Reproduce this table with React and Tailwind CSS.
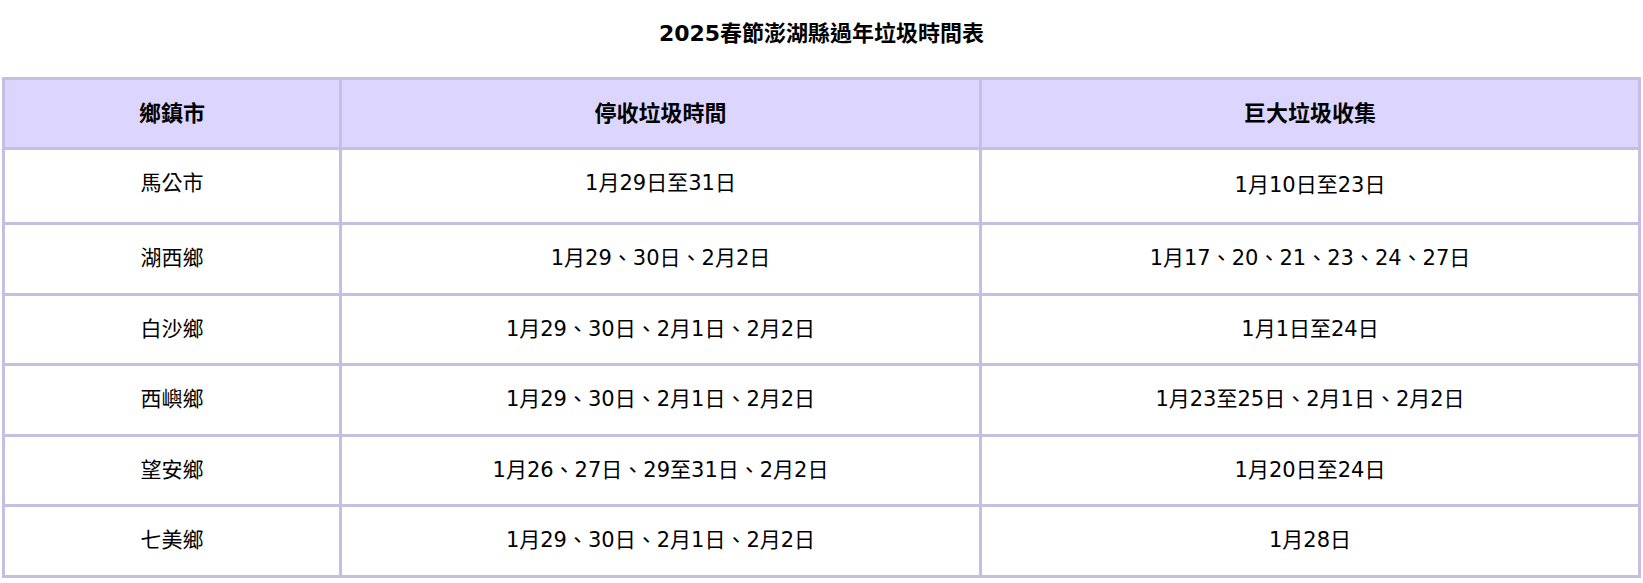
import React from 'react';

const rows = [
  ['馬公市', '1月29日至31日', '1月10日至23日'],
  ['湖西鄉', '1月29、30日、2月2日', '1月17、20、21、23、24、27日'],
  ['白沙鄉', '1月29、30日、2月1日、2月2日', '1月1日至24日'],
  ['西嶼鄉', '1月29、30日、2月1日、2月2日', '1月23至25日、2月1日、2月2日'],
  ['望安鄉', '1月26、27日、29至31日、2月2日', '1月20日至24日'],
  ['七美鄉', '1月29、30日、2月1日、2月2日', '1月28日'],
];

const font = { fontFamily: '"DejaVu Sans", "Noto Sans CJK TC", sans-serif' };

export default function App() {
  return (
    <div className="w-[1643px] h-[583px] bg-white text-black" style={font}>
      {/* Title */}
      <div className="h-[77px] flex items-center justify-center pb-[10px]">
        <h1 className="text-[22px] font-bold">2025春節澎湖縣過年垃圾時間表</h1>
      </div>

      {/* Table */}
      <div className="mx-[2px]">
        <table className="w-full table-fixed border-separate border-spacing-0">
          <colgroup>
            <col className="w-[340px]" />
            <col className="w-[640px]" />
            <col />
          </colgroup>
          <thead>
            <tr className="bg-[#dcd6fe]">
              <th className="h-[73px] border-[3px] border-[#c4bee2] text-[22px] font-bold">鄉鎮市</th>
              <th className="h-[73px] border-y-[3px] border-r-[3px] border-[#c4bee2] text-[22px] font-bold">停收垃圾時間</th>
              <th className="h-[73px] border-y-[3px] border-r-[3px] border-[#c4bee2] text-[22px] font-bold">巨大垃圾收集</th>
            </tr>
          </thead>
          <tbody>
            {rows.map((r, i) => (
              <tr key={r[0]}>
                <td className={`${i === 0 ? 'h-[75px] pb-[5px]' : 'h-[70.5px]'} border-x-[3px] border-b-[3px] border-[#c4bee2] text-center text-[21px]`}>{r[0]}</td>
                <td className={`${i === 0 ? 'h-[75px] pb-[5px]' : 'h-[70.5px]'} border-r-[3px] border-b-[3px] border-[#c4bee2] text-center text-[21px]`}>{r[1]}</td>
                <td className={`${i === 0 ? 'h-[75px]' : 'h-[70.5px]'} border-r-[3px] border-b-[3px] border-[#c4bee2] text-center text-[21px]`}>{r[2]}</td>
              </tr>
            ))}
          </tbody>
        </table>
      </div>
    </div>
  );
}
